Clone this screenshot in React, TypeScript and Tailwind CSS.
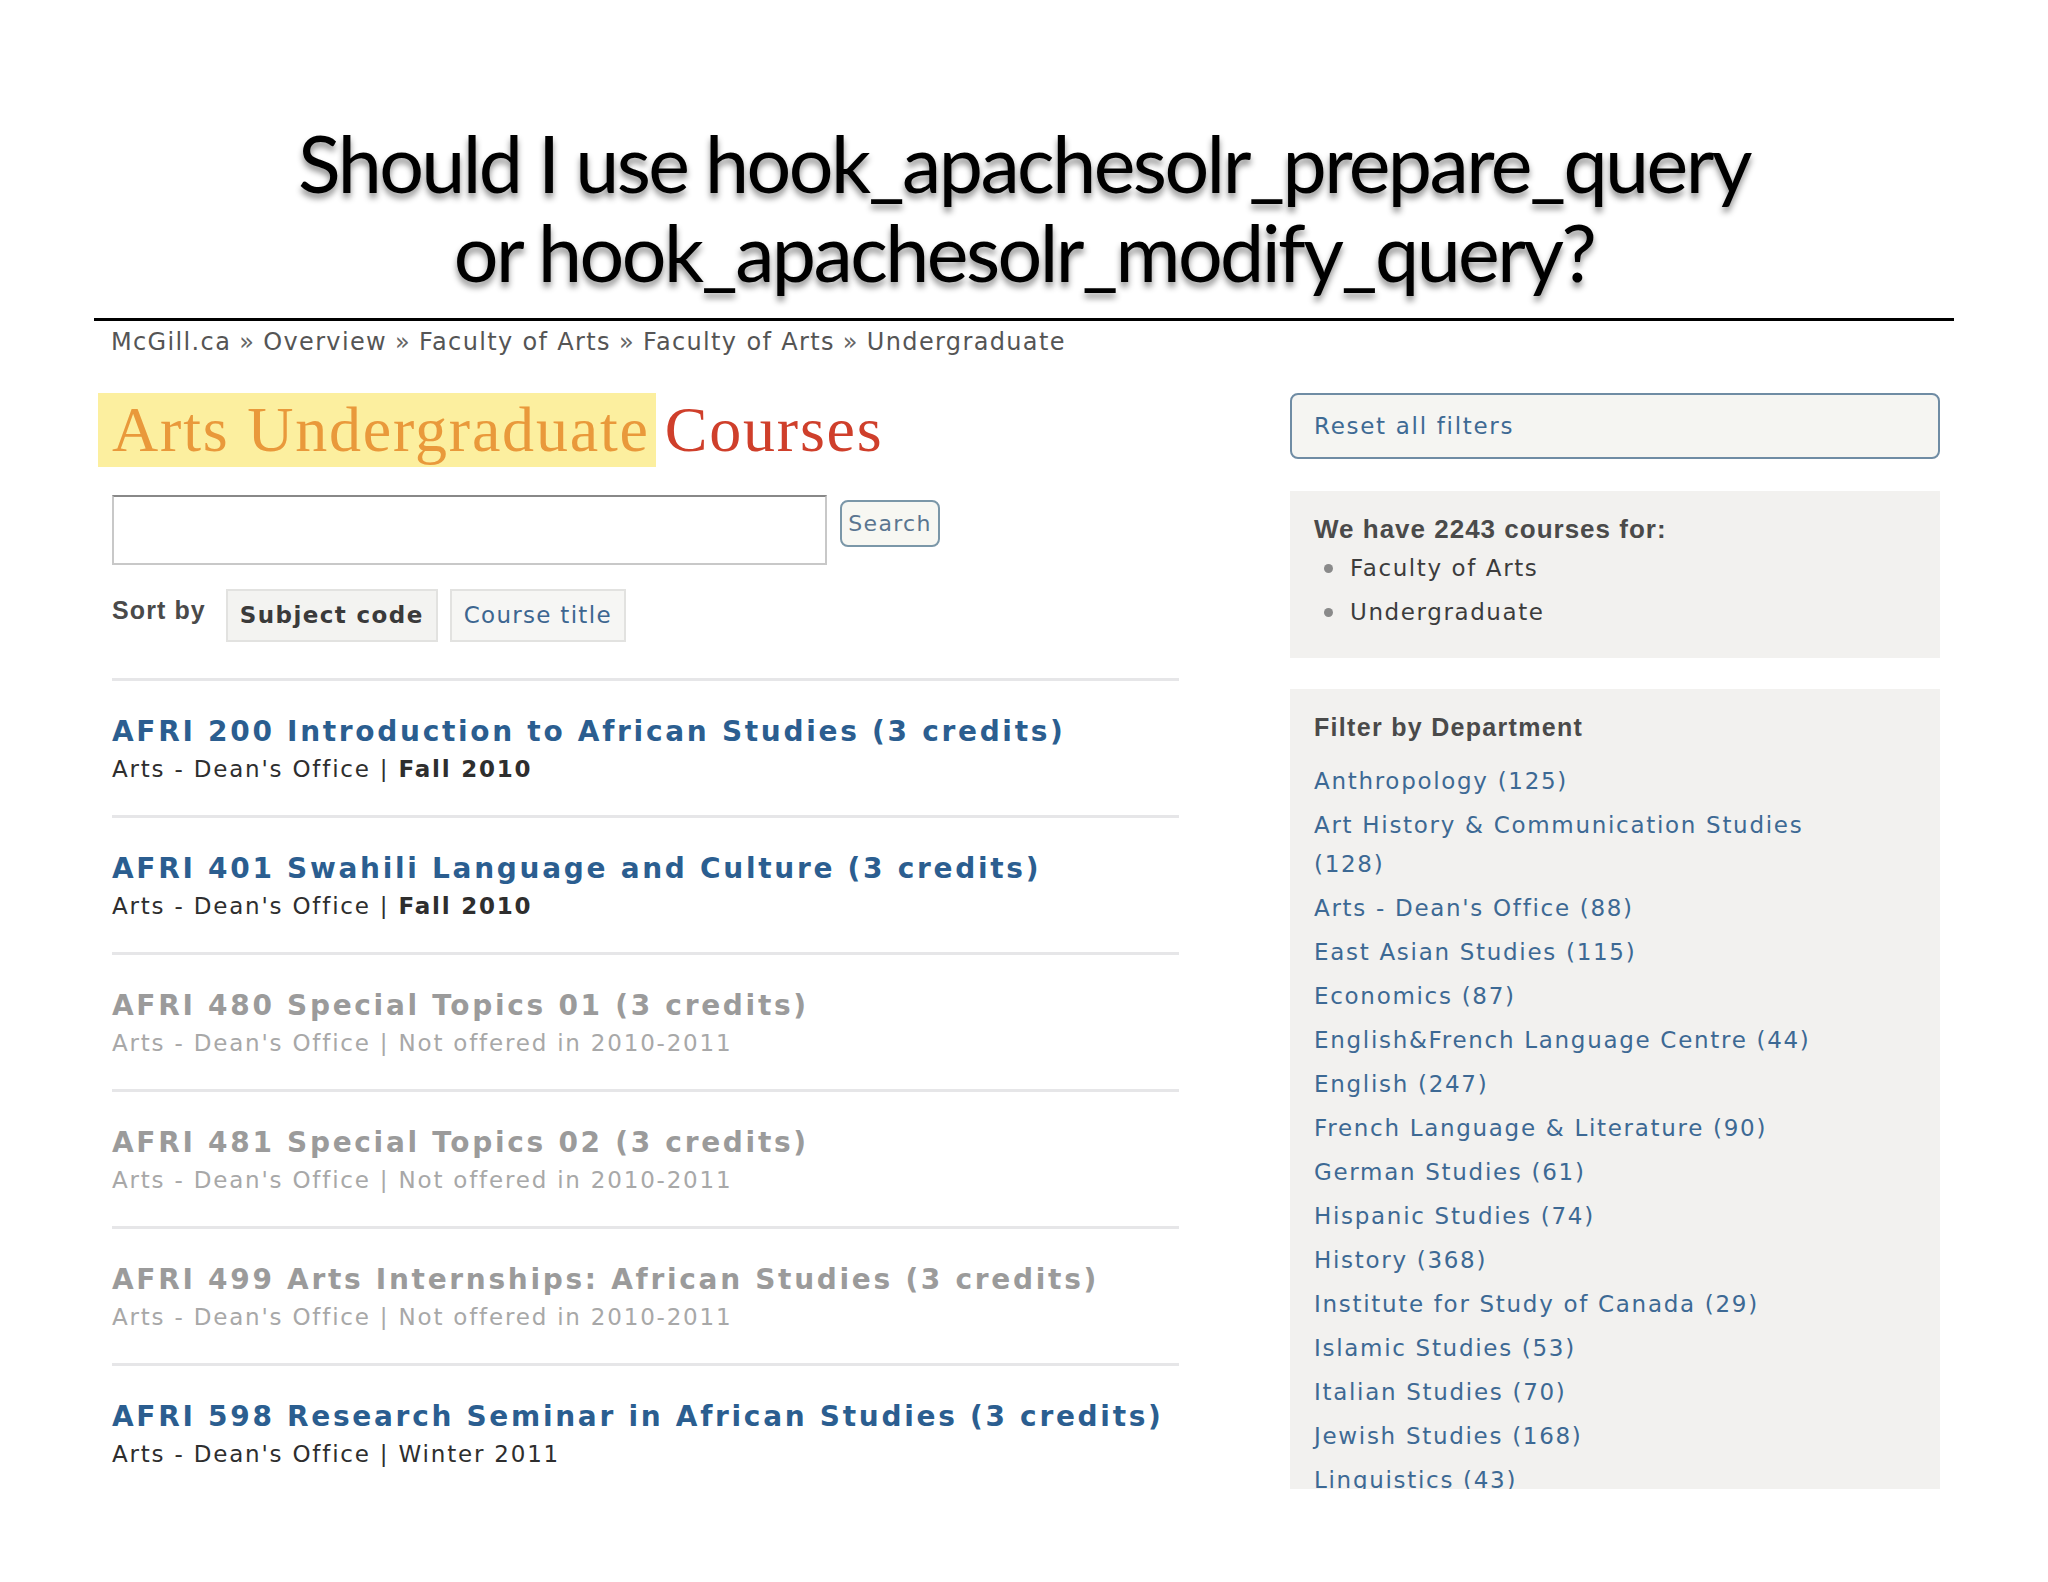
import React from 'react';

const courses = [
  { code: 'AFRI 200 Introduction to African Studies (3 credits)', term: 'Fall 2010', offered: true, bold: true },
  { code: 'AFRI 401 Swahili Language and Culture (3 credits)', term: 'Fall 2010', offered: true, bold: true },
  { code: 'AFRI 480 Special Topics 01 (3 credits)', term: 'Not offered in 2010-2011', offered: false, bold: false },
  { code: 'AFRI 481 Special Topics 02 (3 credits)', term: 'Not offered in 2010-2011', offered: false, bold: false },
  { code: 'AFRI 499 Arts Internships: African Studies (3 credits)', term: 'Not offered in 2010-2011', offered: false, bold: false },
  { code: 'AFRI 598 Research Seminar in African Studies (3 credits)', term: 'Winter 2011', offered: true, bold: false },
];

const departments = [
  'Anthropology (125)',
  'Art History & Communication Studies (128)',
  "Arts - Dean's Office (88)",
  'East Asian Studies (115)',
  'Economics (87)',
  'English&French Language Centre (44)',
  'English (247)',
  'French Language & Literature (90)',
  'German Studies (61)',
  'Hispanic Studies (74)',
  'History (368)',
  'Institute for Study of Canada (29)',
  'Islamic Studies (53)',
  'Italian Studies (70)',
  'Jewish Studies (168)',
  'Linguistics (43)',
];

const crumbs = ['McGill.ca', 'Overview', 'Faculty of Arts', 'Faculty of Arts', 'Undergraduate'];

export default function App() {
  return (
    <div className="w-[2048px] h-[1582px] bg-white overflow-hidden font-['DejaVu_Sans',Verdana,sans-serif]">
      {/* slide title */}
      <h1 className="pt-[118px] text-center text-[79px] leading-[89px] text-black font-['Lato','Open_Sans',sans-serif] tracking-[-2.6px] [text-shadow:0_5px_6px_rgba(0,0,0,0.45)]">
        Should I use hook_apachesolr_prepare_query
        <br />
        or hook_apachesolr_modify_query?
      </h1>
      <div className="mx-[94px] mt-[22px] border-t-[3px] border-black" />

      {/* breadcrumb */}
      <div className="pl-[111px] mt-[6px] h-[30px] leading-[30px] text-[24px] tracking-[1.35px] text-[#555]">
        {crumbs.map((c, i) => (
          <span key={i}>
            {i > 0 && <span className="mx-[8px] text-[#666]">»</span>}
            {c}
          </span>
        ))}
      </div>

      <div className="flex pl-[112px] mt-[36px]">
        {/* main column */}
        <div className="w-[1067px]">
          <h2 className="h-[74px] flex items-center text-[64px] tracking-[1.8px] font-['Liberation_Serif','DejaVu_Serif',serif] leading-none">
            <span className="bg-[#fcef9f] text-[#e9993b] -ml-[14px] pl-[14px] pr-[6px] h-[74px] flex items-center">
              Arts Undergraduate
            </span>
            <span className="text-[#cf3f2b] ml-[9px]">Courses</span>
          </h2>

          <div className="flex items-start mt-[28px]">
            <div className="w-[715px] h-[70px] border-2 border-[#c8c8c8] border-t-[#888] bg-white" />
            <button className="ml-[13px] mt-[5px] w-[100px] h-[47px] rounded-[8px] border-2 border-[#7b97a8] bg-[#f7f7f2] text-[22px] tracking-[1.3px] text-[#5a7590]">
              Search
            </button>
          </div>

          <div className="flex items-start mt-[24px]">
            <span className="mt-[3px] text-[25px] tracking-[1.1px] font-bold text-[#4a4a4a] font-['Liberation_Sans',Arial,sans-serif]">
              Sort by
            </span>
            <div className="ml-[20px] h-[53px] px-[12px] flex items-center bg-[#f3f3f1] border-2 border-[#e2e2e0] text-[23px] tracking-[1.4px] font-bold text-[#3a3a3a]">
              Subject code
            </div>
            <div className="ml-[12px] h-[53px] px-[12px] flex items-center bg-[#f6f6f4] border-2 border-[#e2e2e0] text-[23px] tracking-[1.3px] text-[#3d6690]">
              Course title
            </div>
          </div>

          <ul className="mt-[36px]">
            {courses.map((c) => (
              <li key={c.code} className="h-[137px] border-t-[3px] border-[#e6e6e8] pt-[34px]">
                <div
                  className={`text-[28px] leading-[34px] tracking-[2.7px] font-bold ${c.offered ? 'text-[#2b5e90]' : 'text-[#9b9b9b]'}`}
                >
                  {c.code}
                </div>
                <div
                  className={`text-[23px] leading-[32px] tracking-[1.8px] mt-[4px] ${c.offered ? 'text-[#2e2e2e]' : 'text-[#a8a8a8]'}`}
                >
                  Arts - Dean's Office | <span className={c.bold ? 'font-bold' : ''}>{c.term}</span>
                </div>
              </li>
            ))}
          </ul>
        </div>

        {/* sidebar */}
        <div className="ml-[111px] w-[650px]">
          <div className="h-[66px] rounded-[8px] border-2 border-[#6f8ca4] bg-[#f5f5f2] flex items-center pl-[22px] text-[23px] tracking-[1.7px] text-[#3e6a94]">
            Reset all filters
          </div>

          <div className="mt-[32px] h-[167px] bg-[#f2f1ef] pl-[24px] pt-[20px]">
            <div className="text-[26px] leading-[36px] tracking-[1px] font-bold text-[#4a4a4a] font-['Liberation_Sans',Arial,sans-serif]">
              We have 2243 courses for:
            </div>
            <ul className="-mt-[1px] text-[23px] leading-[44px] tracking-[1.6px] text-[#3c3c3c]">
              {['Faculty of Arts', 'Undergraduate'].map((t) => (
                <li key={t} className="flex items-center">
                  <span className="ml-[10px] mr-[17px] w-[9px] h-[9px] rounded-full bg-[#8a8a8a]" />
                  {t}
                </li>
              ))}
            </ul>
          </div>

          <div className="mt-[31px] h-[800px] bg-[#f2f1ef] pl-[24px] pt-[20px] overflow-hidden">
            <div className="text-[25px] leading-[36px] tracking-[1.3px] font-bold text-[#4a4a4a] font-['Liberation_Sans',Arial,sans-serif]">
              Filter by Department
            </div>
            <ul className="mt-[17px] w-[535px] text-[23px] leading-[39px] tracking-[1.7px] text-[#3d6994]">
              {departments.map((d) => (
                <li key={d} className="mb-[5px]">
                  {d}
                </li>
              ))}
            </ul>
          </div>
        </div>
      </div>
    </div>
  );
}
